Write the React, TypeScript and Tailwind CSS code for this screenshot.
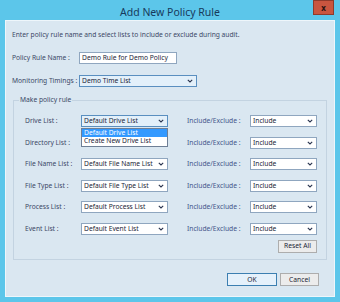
import React from "react";

const font = { fontFamily: '"Noto Sans", "Open Sans", "Liberation Sans", sans-serif' };

function Chevron() {
  return (
    <svg width="6" height="4" viewBox="0 0 6 4" className="shrink-0">
      <path d="M0.8 0.8 L3 3 L5.2 0.8" fill="none" stroke="#2a3550" strokeWidth="1.1" />
    </svg>
  );
}

function Select({ text, w, tint = false }: { text: string; w: string; tint?: boolean }) {
  return (
    <div
      className={`${w} h-[12px] flex items-center justify-between pl-[2px] pr-[3px] border ${
        tint ? "bg-[#e3f0fa] border-[#5a8fc0]" : "bg-white border-[#8fa6bf]"
      }`}
    >
      <span className="text-[6.7px] leading-[8px] text-[#1b2436] whitespace-nowrap">{text}</span>
      <Chevron />
    </div>
  );
}

const rows = [
  ["Drive List :", "Default Drive List"],
  ["Directory List :", ""],
  ["File Name List :", "Default File Name List"],
  ["File Type List :", "Default File Type List"],
  ["Process List :", "Default Process List"],
  ["Event List :", "Default Event List"],
];

export default function App() {
  return (
    <div style={font} className="w-[340px] h-[302px] bg-[#5cc6ea] flex flex-col">
      <div className="relative h-[20px] flex items-center justify-center">
        <span className="text-[10.5px] leading-[12px] text-[#173a5c] mt-[3px]">Add New Policy Rule</span>
        <div className="absolute top-0 right-[6px] w-[21px] h-[15px] bg-[#c9553f] border border-[#8e3a2c] flex items-center justify-center">
          <span className="text-[8px] leading-[8px] font-bold text-[#2a1210]">x</span>
        </div>
      </div>
      <div className="mx-[5px] h-[277px] bg-[#dae7f1] border border-[#eef6fb] flex flex-col px-[6px] text-[#3a4766]">
        <p className="mt-[10px] h-[8px] leading-[8px] text-[6.7px] whitespace-nowrap">
          Enter policy rule name and select lists to include or exclude during audit.
        </p>
        <div className="mt-[13px] flex items-center h-[12px]">
          <span className="w-[67px] text-[6.7px] leading-[8px] whitespace-nowrap">Policy Rule Name :</span>
          <div className="w-[98px] h-[12px] bg-white border border-[#8fa6bf] flex items-center pl-[2px]">
            <span className="text-[6.7px] leading-[8px] text-[#1b2436] whitespace-nowrap">Demo Rule for Demo Policy</span>
          </div>
        </div>
        <div className="mt-[11px] flex items-center h-[12px]">
          <span className="w-[67px] text-[6.7px] leading-[8px] whitespace-nowrap">Monitoring Timings :</span>
          <Select text="Demo Time List" w="w-[118px]" tint />
        </div>
        <div className="relative mt-[13px] ml-[1px] w-[314px] h-[160px] border border-[#c3d3e1] flex flex-col pl-[11px] pr-[9px]">
          <span className="absolute -top-[5px] left-[5px] px-[1px] bg-[#dae7f1] text-[6.7px] leading-[8px]">Make policy rule</span>
          <div className="mt-[14px] flex flex-col gap-[9.5px]">
            {rows.map(([label, val], i) => (
              <div key={label} className="relative flex items-center h-[12px]">
                <span className="w-[56px] text-[6.7px] leading-[8px] whitespace-nowrap">{label}</span>
                {i === 1 ? <div className="w-[87px] h-[12px]" /> : <Select text={val} w="w-[87px]" tint={i === 0} />}
                <span className="ml-[19px] w-[63px] text-[6.7px] leading-[8px] text-[#44558a] whitespace-nowrap">Include/Exclude :</span>
                <Select text="Include" w="w-[67px]" />
                {i === 0 && (
                  <div className="absolute left-[56px] top-[13px] w-[87px] h-[19px] bg-white border border-[#6e7f96] flex flex-col z-10">
                    <div className="h-[8px] bg-[#3399ff] text-white text-[6.7px] leading-[8px] pl-[2px] whitespace-nowrap">Default Drive List</div>
                    <div className="h-[8px] text-[#1b2436] text-[6.7px] leading-[8px] pl-[2px] whitespace-nowrap">Create New Drive List</div>
                  </div>
                )}
              </div>
            ))}
          </div>
          <div className="mt-[5px] flex justify-end">
            <div className="w-[39px] h-[13px] bg-[#ececec] border border-[#adadad] flex items-center justify-center text-[6.7px] leading-[8px] text-[#1b2436]">
              Reset All
            </div>
          </div>
        </div>
        <div className="mt-[13px] flex justify-end gap-[3px] pr-[9px]">
          <div className="w-[50px] h-[13px] bg-[#e5f1fb] border border-[#3c7fb1] flex items-center justify-center text-[6.7px] leading-[8px] text-[#1b2436]">
            OK
          </div>
          <div className="w-[39px] h-[13px] bg-[#ececec] border border-[#adadad] flex items-center justify-center text-[6.7px] leading-[8px] text-[#1b2436]">
            Cancel
          </div>
        </div>
      </div>
    </div>
  );
}
